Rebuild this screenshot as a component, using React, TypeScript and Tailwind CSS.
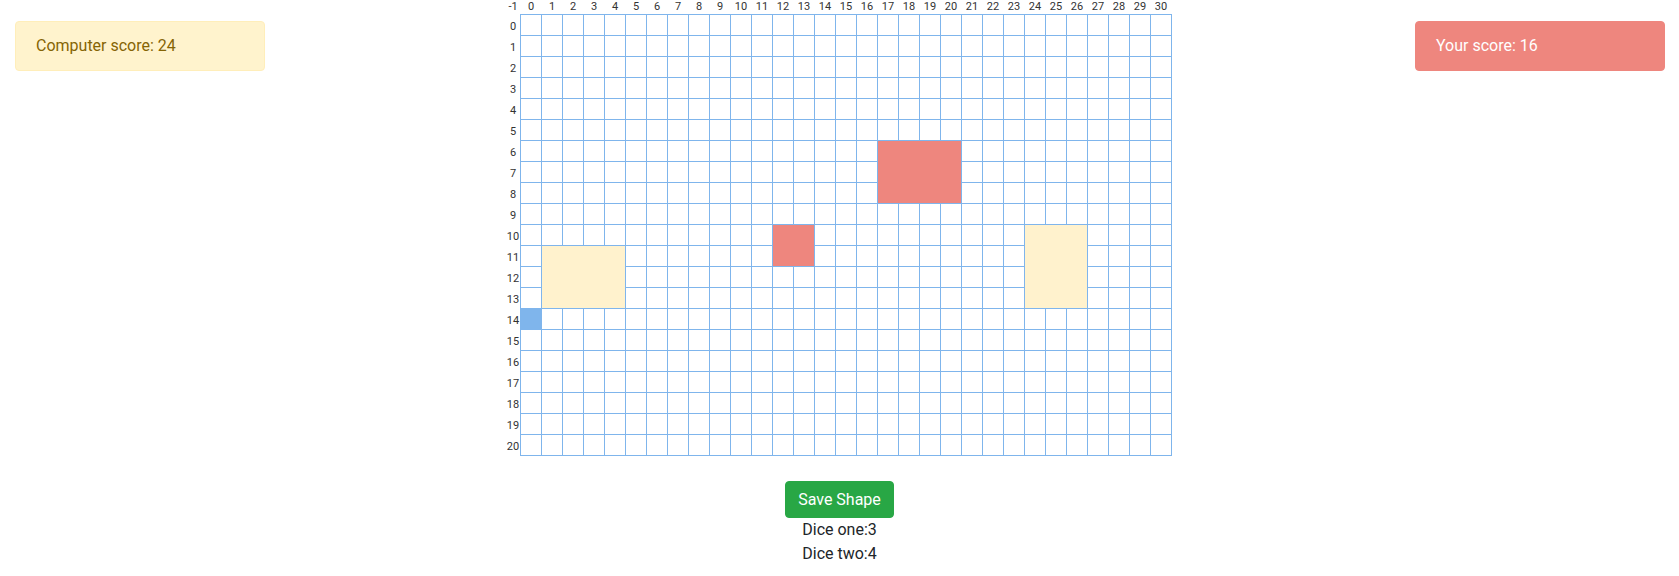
const COLS = 31;
const ROWS = 21;

type Shape = { col: number; row: number; w: number; h: number; color: string };

const shapes: Shape[] = [
  { col: 17, row: 6, w: 4, h: 3, color: "bg-[#ee867e]" },
  { col: 12, row: 10, w: 2, h: 2, color: "bg-[#ee867e]" },
  { col: 24, row: 10, w: 3, h: 4, color: "bg-[#fff2cd]" },
  { col: 1, row: 11, w: 4, h: 3, color: "bg-[#fff2cd]" },
  { col: 0, row: 14, w: 1, h: 1, color: "bg-[#7fb5ec]" },
];

function Board() {
  return (
    <div className="mr-[2px] flex flex-col text-[11px] leading-[14px] text-[#333]">
      <div className="flex">
        <div className="w-[14px] text-center">-1</div>
        <div className="flex pl-px">
          {Array.from({ length: COLS }, (_, c) => (
            <div key={c} className="w-[21px] pr-px text-center">
              {c}
            </div>
          ))}
        </div>
      </div>
      <div className="flex items-start">
        <div className="flex w-[14px] flex-col pt-[2px]">
          {Array.from({ length: ROWS }, (_, r) => (
            <div key={r} className="flex h-[21px] items-center justify-center whitespace-nowrap">
              {r}
            </div>
          ))}
        </div>
        <div className="grid grid-cols-[repeat(31,20px)] grid-rows-[repeat(21,20px)] gap-px bg-[#7fb5ec] p-px">
          {Array.from({ length: ROWS * COLS }, (_, i) => (
            <div
              key={i}
              className="bg-white"
              style={{ gridColumn: (i % COLS) + 1, gridRow: Math.floor(i / COLS) + 1 }}
            />
          ))}
          {shapes.map((s, i) => (
            <div
              key={"s" + i}
              className={s.color}
              style={{
                gridColumn: `${s.col + 1} / span ${s.w}`,
                gridRow: `${s.row + 1} / span ${s.h}`,
              }}
            />
          ))}
        </div>
      </div>
    </div>
  );
}

export default function App() {
  return (
    <div className="flex flex-col font-['Roboto',sans-serif] text-base leading-6 text-[#212529]">
      <div className="flex items-start justify-between">
        <div className="mt-[21px] ml-[15px] w-[250px] rounded border border-[#ffeeba] bg-[#fff3cd] px-5 py-3 text-[#856404]">
          Computer score: 24
        </div>
        <Board />
        <div className="mt-[21px] mr-[14px] w-[250px] rounded border border-[#ee867e] bg-[#ee867e] px-5 py-3 text-white">
          Your score: 16
        </div>
      </div>
      <div className="mt-[24px] flex flex-col items-center">
        <button className="rounded border border-[#28a745] bg-[#28a745] px-3 py-1.5 leading-[23px] text-white">
          Save Shape
        </button>
        <div>Dice one:3</div>
        <div>Dice two:4</div>
      </div>
    </div>
  );
}
